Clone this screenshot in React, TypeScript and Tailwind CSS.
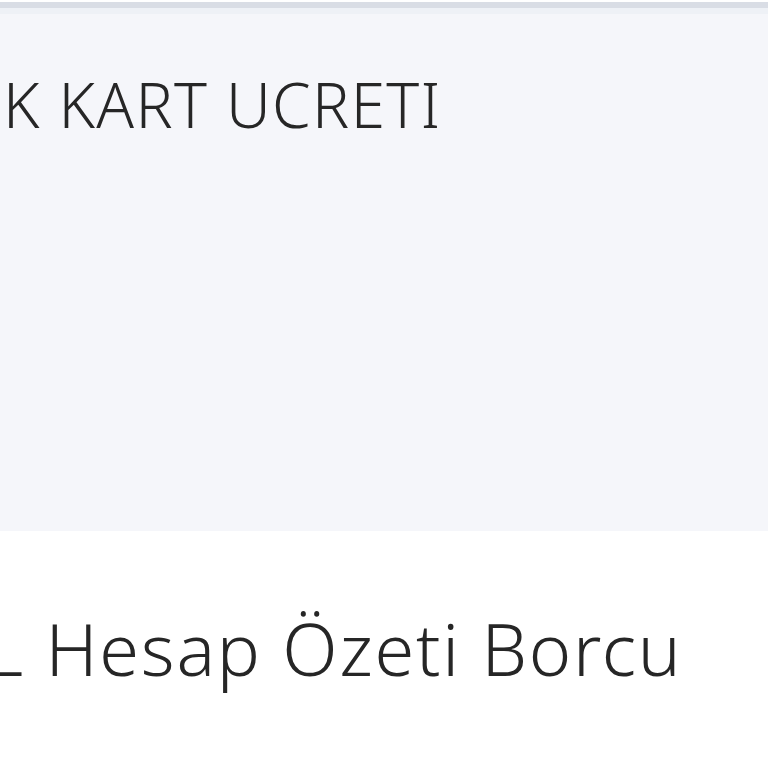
export default function App() {
  return (
    <div
      className="w-[768px] h-[768px] overflow-hidden bg-white"
      style={{ fontFamily: '"Noto Sans", "Open Sans", sans-serif' }}
    >
      <div className="h-[2px] bg-white" />
      <div className="h-[6px] bg-[#d9dde5]" />
      <div className="h-[6px] bg-[#eef1f6]" />
      <div className="h-[517px] bg-[#f5f6fa] pt-[50px]">
        <div className="pl-[3px] text-[62px] leading-[80px] font-light tracking-[1.4px] text-[#262626] whitespace-nowrap">
          K KART UCRETI
        </div>
      </div>
      <div className="pt-[72px]">
        <div className="ml-[-14px] text-[72px] leading-[90px] font-light tracking-[1.8px] text-[#262626] whitespace-nowrap">
          L Hesap Özeti Borcu
        </div>
      </div>
    </div>
  );
}
